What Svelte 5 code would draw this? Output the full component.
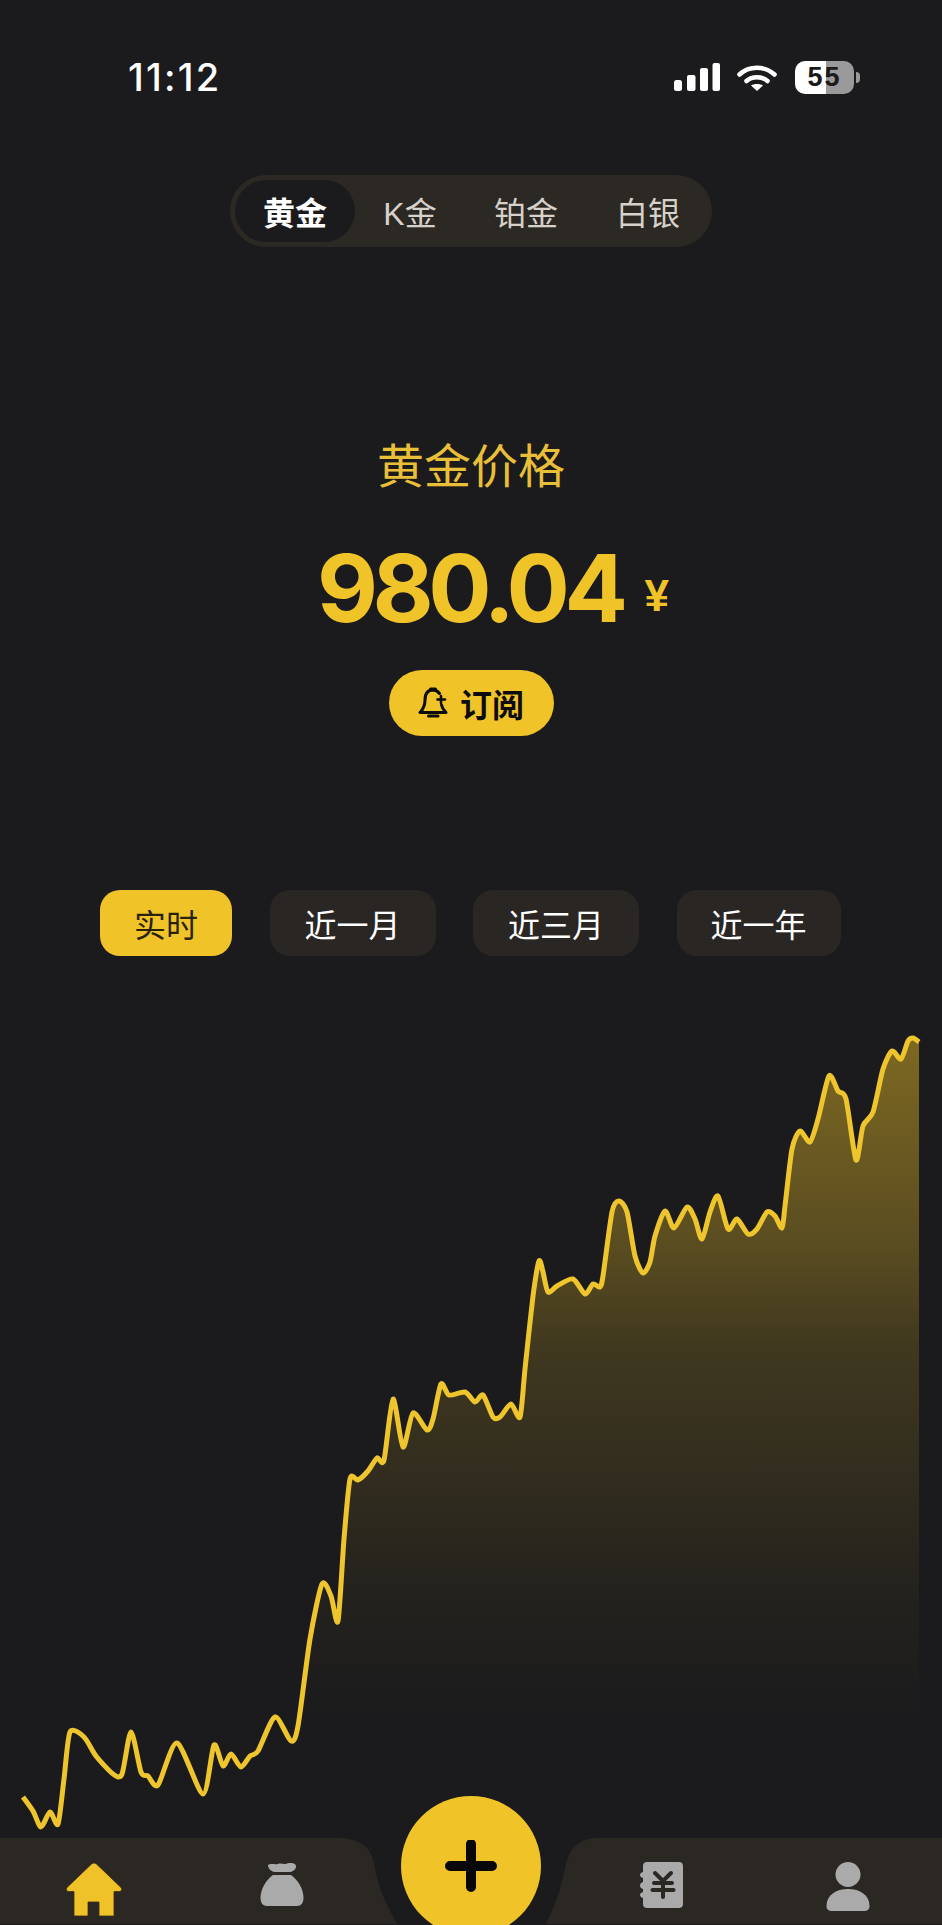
<script>
  const metals = ["黄金", "K金", "铂金", "白银"];
  const ranges = ["实时", "近一月", "近三月", "近一年"];

  // price line, in page coordinates
  const points = [
    [23, 1798], [33, 1812], [41, 1828], [50, 1813], [58, 1825], [64, 1780], [70, 1733],
    [84, 1738], [96, 1757], [113, 1775], [122, 1775], [131, 1733], [141, 1773], [148, 1777],
    [158, 1786], [177, 1744], [203, 1795], [214, 1746], [223, 1767], [231, 1755], [241, 1768],
    [250, 1757], [258, 1752], [275, 1718], [291, 1742], [298, 1727], [310, 1640], [322, 1585],
    [331, 1597], [338, 1622], [344, 1540], [350, 1480], [358, 1481], [368, 1472], [377, 1459],
    [384, 1461], [393, 1400], [403, 1448], [413, 1414], [427, 1431], [433, 1420], [441, 1385],
    [449, 1396], [465, 1393], [475, 1403], [483, 1396], [493, 1418], [500, 1418], [511, 1405],
    [520, 1418], [525, 1370], [533, 1297], [539, 1262], [543, 1273], [548, 1293], [557, 1287],
    [573, 1280], [585, 1295], [593, 1285], [600, 1288], [603, 1277], [612, 1213], [619, 1202],
    [627, 1213], [635, 1257], [643, 1274], [650, 1263], [655, 1237], [665, 1212], [674, 1229],
    [687, 1208], [695, 1220], [702, 1240], [710, 1213], [718, 1197], [728, 1230], [737, 1220],
    [748, 1235], [757, 1230], [767, 1213], [775, 1217], [782, 1229], [785, 1207], [792, 1150],
    [800, 1132], [810, 1143], [818, 1120], [829, 1077], [838, 1092], [846, 1100], [856, 1161],
    [863, 1127], [873, 1113], [883, 1070], [892, 1052], [901, 1060], [908, 1042], [913, 1039],
    [919, 1043],
  ];

  const smooth = (pts) => {
    let d = `M${pts[0][0]} ${pts[0][1]}`;
    for (let i = 0; i < pts.length - 1; i++) {
      const p0 = pts[i - 1] || pts[i];
      const p1 = pts[i];
      const p2 = pts[i + 1];
      const p3 = pts[i + 2] || p2;
      const c1x = p1[0] + (p2[0] - p0[0]) / 8;
      const c1y = p1[1] + (p2[1] - p0[1]) / 8;
      const c2x = p2[0] - (p3[0] - p1[0]) / 8;
      const c2y = p2[1] - (p3[1] - p1[1]) / 8;
      d += ` C${c1x.toFixed(1)} ${c1y.toFixed(1)} ${c2x.toFixed(1)} ${c2y.toFixed(1)} ${p2[0]} ${p2[1]}`;
    }
    return d;
  };

  const line = smooth(points);
  const area = `${line} V1830 H23 Z`;
</script>

<div class="page">
  <div class="status">
    <span class="time">11:12</span>
    <div class="status-icons">
      <svg class="signal" width="46" height="28" viewBox="0 0 46 28">
        <rect x="0" y="17" width="8" height="11" rx="2.5" />
        <rect x="13" y="12" width="8.5" height="16" rx="2" />
        <rect x="26" y="5" width="8" height="23" rx="2" />
        <rect x="38.5" y="0" width="7.5" height="28" rx="2" />
      </svg>
      <svg class="wifi" width="40" height="27" viewBox="0 0 40 27">
        <path d="M2.5 10.5 C12 1.5 28 1.5 37.5 10.5" />
        <path d="M9.5 17 C15 12 25 12 30.5 17" />
        <path class="wedge" d="M14 21.5 C17 19.5 23 19.5 26 21.5 L20 27 Z" />
      </svg>
      <div class="battery"><span>55</span></div>
      <i class="battery-tip"></i>
    </div>
  </div>

  <div class="metals">
    {#each metals as metal, i}
      <span class="metal" class:active={i === 0}>{metal}</span>
    {/each}
  </div>

  <h1 class="title">黄金价格</h1>
  <div class="price">
    <span class="amount">980.04</span>
    <span class="unit">¥</span>
  </div>
  <button class="subscribe">
    <svg width="31" height="32" viewBox="0 0 31 32" fill="none">
      <path
        d="M15 3 C8.5 3 7 8.5 7 13 C7 19 5.5 22 2 25.5 H28 C25.5 23 24 21 23.5 18"
        stroke="#0c0c0c"
        stroke-width="3"
        stroke-linejoin="round"
        stroke-linecap="round"
      />
      <path d="M15 3 C18 3 20 4.5 21.5 6.5" stroke="#0c0c0c" stroke-width="3" stroke-linecap="round" />
      <path d="M12.5 2 H17.5" stroke="#0c0c0c" stroke-width="3" stroke-linecap="round" />
      <path d="M10.5 29 H20" stroke="#0c0c0c" stroke-width="3" stroke-linecap="round" />
      <path d="M23 9 V16 M19.5 12.5 H27" stroke="#0c0c0c" stroke-width="2.6" stroke-linecap="round" />
    </svg>
    订阅
  </button>

  <div class="ranges">
    {#each ranges as range, i}
      <button class="range" class:active={i === 0}>{range}</button>
    {/each}
  </div>

  <svg class="chart" width="942" height="809" viewBox="0 1030 942 809">
    <defs>
      <linearGradient id="gold" gradientUnits="userSpaceOnUse" x1="0" y1="1040" x2="0" y2="1720">
        <stop offset="0" stop-color="#f0c328" stop-opacity="0.46" />
        <stop offset="0.31" stop-color="#f0c328" stop-opacity="0.29" />
        <stop offset="0.46" stop-color="#f0c328" stop-opacity="0.17" />
        <stop offset="0.82" stop-color="#f0c328" stop-opacity="0.04" />
        <stop offset="1" stop-color="#f0c328" stop-opacity="0" />
      </linearGradient>
    </defs>
    <path d={area} fill="url(#gold)" />
    <path d={line} fill="none" stroke="#efc52e" stroke-width="5" stroke-linejoin="round" />
  </svg>

  <nav class="tabbar">
    <svg class="tabbar-bg" width="942" height="86" viewBox="0 0 942 86">
      <path d="M0 0 H336 C358 0 371 7 374 26 C378 50 388 70 397 86 H0 Z" />
      <path d="M942 0 H598 C580 0 569 9 565 30 C561 52 553 72 546 86 H942 Z" />
    </svg>
    <div class="tab-group">
      <svg class="tab" width="56" height="54" viewBox="0 0 56 54">
        <path
          d="M28 1 C26.5 1 25.5 2 24.5 3 L1 25.5 C-0.5 27.5 1 29.5 3 29.5 H8 V54 H22 V40 H33 V54 H48 V29.5 H53 C55 29.5 56.5 27.5 55 25.5 L31.5 3 C30.5 2 29.5 1 28 1 Z"
          fill="#efc22a"
          stroke="#3c2d10"
          stroke-width="0.8"
        />
      </svg>
      <svg class="tab" width="44" height="44" viewBox="0 0 44 44">
        <path
          d="M8 3 C11 1 15 3 18 2 C21 0.500 24 3 27 1.500 C31 0.500 36 1 36 4.500 C36 8 32 10 29 10 H15 C12 10 8 7 8 3 Z"
          fill="#aaaaaa"
        />
        <path
          d="M13 13 H31 C38 18 43.500 27 43.500 36 C43.500 41 41 44 37 44 H7 C3 44 0.500 41 0.500 36 C0.500 27 6 18 13 13 Z"
          fill="#aaaaaa"
        />
      </svg>
    </div>
    <div class="tab-group">
      <svg class="tab" width="45" height="46" viewBox="0 0 45 46">
        <path
          d="M9 0 H41 C43.5 0 45 1.5 45 4 V42 C45 44.5 43.5 46 41 46 H9 C6.500 46 5 44.500 5 42 V36 C1 35 1 31 5 30 V27 C1 26 1 21 5 20 V16 C1 15 1 11 5 10 V4 C5 1.500 6.500 0 9 0 Z"
          fill="#aaaaaa"
        />
        <path
          d="M17 11 L25 19 L33 11 M25 19 V35 M16 21 H34 M14.500 28 H35.500"
          fill="none"
          stroke="#2b2723"
          stroke-width="4"
          stroke-linecap="round"
        />
      </svg>
      <svg class="tab" width="44" height="49" viewBox="0 0 44 49">
        <circle cx="22" cy="12.500" r="12.500" fill="#aaaaaa" />
        <path d="M0.500 44 C0.500 33 10 27 22 27 C34 27 43.500 33 43.500 44 C43.500 47.500 41.500 49 38 49 H6 C2.500 49 0.500 47.500 0.500 44 Z" fill="#aaaaaa" />
      </svg>
    </div>
    <button class="add" aria-label="添加">
      <svg width="52" height="52" viewBox="0 0 52 52">
        <path d="M26 4 V47 M5 26 H47" stroke="#070707" stroke-width="10" stroke-linecap="round" />
      </svg>
    </button>
  </nav>
</div>

<style>
  :global(body) {
    background: #1b1b1d;
  }

  .page {
    position: relative;
    width: 942px;
    height: 1925px;
    overflow: hidden;
    display: flex;
    flex-direction: column;
    align-items: center;
    background: #1b1b1d;
    font-family: "Liberation Sans", "Noto Sans CJK SC", sans-serif;
    color: #fff;
  }

  button {
    border: none;
    font-family: inherit;
    padding: 0;
  }

  .status {
    align-self: stretch;
    height: 44px;
    margin-top: 55px;
    padding: 0 82px 0 128px;
    display: flex;
    align-items: center;
    justify-content: space-between;
  }

  .time {
    font-family: "Inter", sans-serif;
    font-size: 38px;
    font-weight: 500;
    letter-spacing: 2.200px;
  }

  .status-icons {
    display: flex;
    align-items: center;
  }

  .signal {
    fill: #fff;
    margin-right: 17px;
  }

  .wifi {
    margin-right: 18px;
    fill: none;
    stroke: #fff;
    stroke-width: 4.5;
    stroke-linecap: round;
  }

  .wifi .wedge {
    fill: #fff;
    stroke: none;
  }

  .battery {
    width: 59px;
    height: 33px;
    border-radius: 10px;
    background: linear-gradient(to right, #fff 0 53%, #9a9a9a 53% 100%);
    display: flex;
    align-items: center;
    justify-content: center;
    color: #1a1a1a;
    font-family: "Liberation Sans", sans-serif;
    font-size: 27px;
    font-weight: 700;
    letter-spacing: 2px;
  }

  .battery-tip {
    width: 4px;
    height: 11px;
    margin-left: 2px;
    border-radius: 0 4px 4px 0;
    background: #9a9a9a;
  }

  .metals {
    margin-top: 76px;
    width: 482px;
    height: 72px;
    box-sizing: border-box;
    padding: 5px;
    border-radius: 36px;
    background: #2c2824;
    display: grid;
    grid-template-columns: 120px 110px 122px 122px;
    align-items: stretch;
  }

  .metal {
    display: flex;
    align-items: center;
    justify-content: center;
    font-size: 32px;
    color: #d6d1c9;
    border-radius: 31px;
  }

  .metal.active {
    background: #1b1b1d;
    color: #fff;
    font-weight: 700;
  }

  .title {
    margin: 190px 0 0;
    font-size: 47px;
    font-weight: 400;
    line-height: 60px;
    color: #e9bf38;
  }

  .price {
    margin-top: 41px;
    padding-left: 44px;
    display: flex;
    align-items: center;
    height: 100px;
    color: #f0c328;
    font-weight: 700;
  }

  .amount {
    font-family: "Inter", sans-serif;
    font-size: 94px;
    line-height: 100px;
    letter-spacing: -5.500px;
  }

  .unit {
    margin: 16px 0 0 22px;
    font-size: 44px;
    line-height: 50px;
  }

  .subscribe {
    margin-top: 32px;
    width: 165px;
    height: 66px;
    border-radius: 33px;
    background: #f0c328;
    color: #0c0c0c;
    font-size: 32px;
    font-weight: 700;
    display: flex;
    align-items: center;
    justify-content: center;
    gap: 11px;
  }

  .ranges {
    margin-top: 154px;
    align-self: stretch;
    padding-left: 100px;
    display: grid;
    grid-template-columns: 132px 166px 166px 164px;
    column-gap: 37.5px;
  }

  .range {
    height: 66px;
    border-radius: 20px;
    background: #2a2623;
    color: #fff;
    font-size: 32px;
  }

  .range.active {
    background: #f0c328;
    color: #2a2208;
  }

  .chart {
    display: block;
    flex: none;
    margin-top: 73px;
    align-self: flex-start;
  }

  .tabbar {
    position: relative;
    flex: none;
    align-self: stretch;
    height: 86px;
    display: grid;
    grid-template-columns: 376px 376px;
    column-gap: 190px;
  }

  .tabbar-bg {
    position: absolute;
    left: 0;
    top: 0;
    fill: #2b2723;
  }

  .tab-group {
    position: relative;
    display: grid;
    grid-template-columns: 1fr 1fr;
    justify-items: center;
    align-items: start;
    padding-top: 24px;
  }

  .add {
    position: absolute;
    left: 401px;
    top: -42px;
    width: 140px;
    height: 140px;
    border-radius: 50%;
    background: #f0c328;
    display: flex;
    align-items: center;
    justify-content: center;
  }
</style>
